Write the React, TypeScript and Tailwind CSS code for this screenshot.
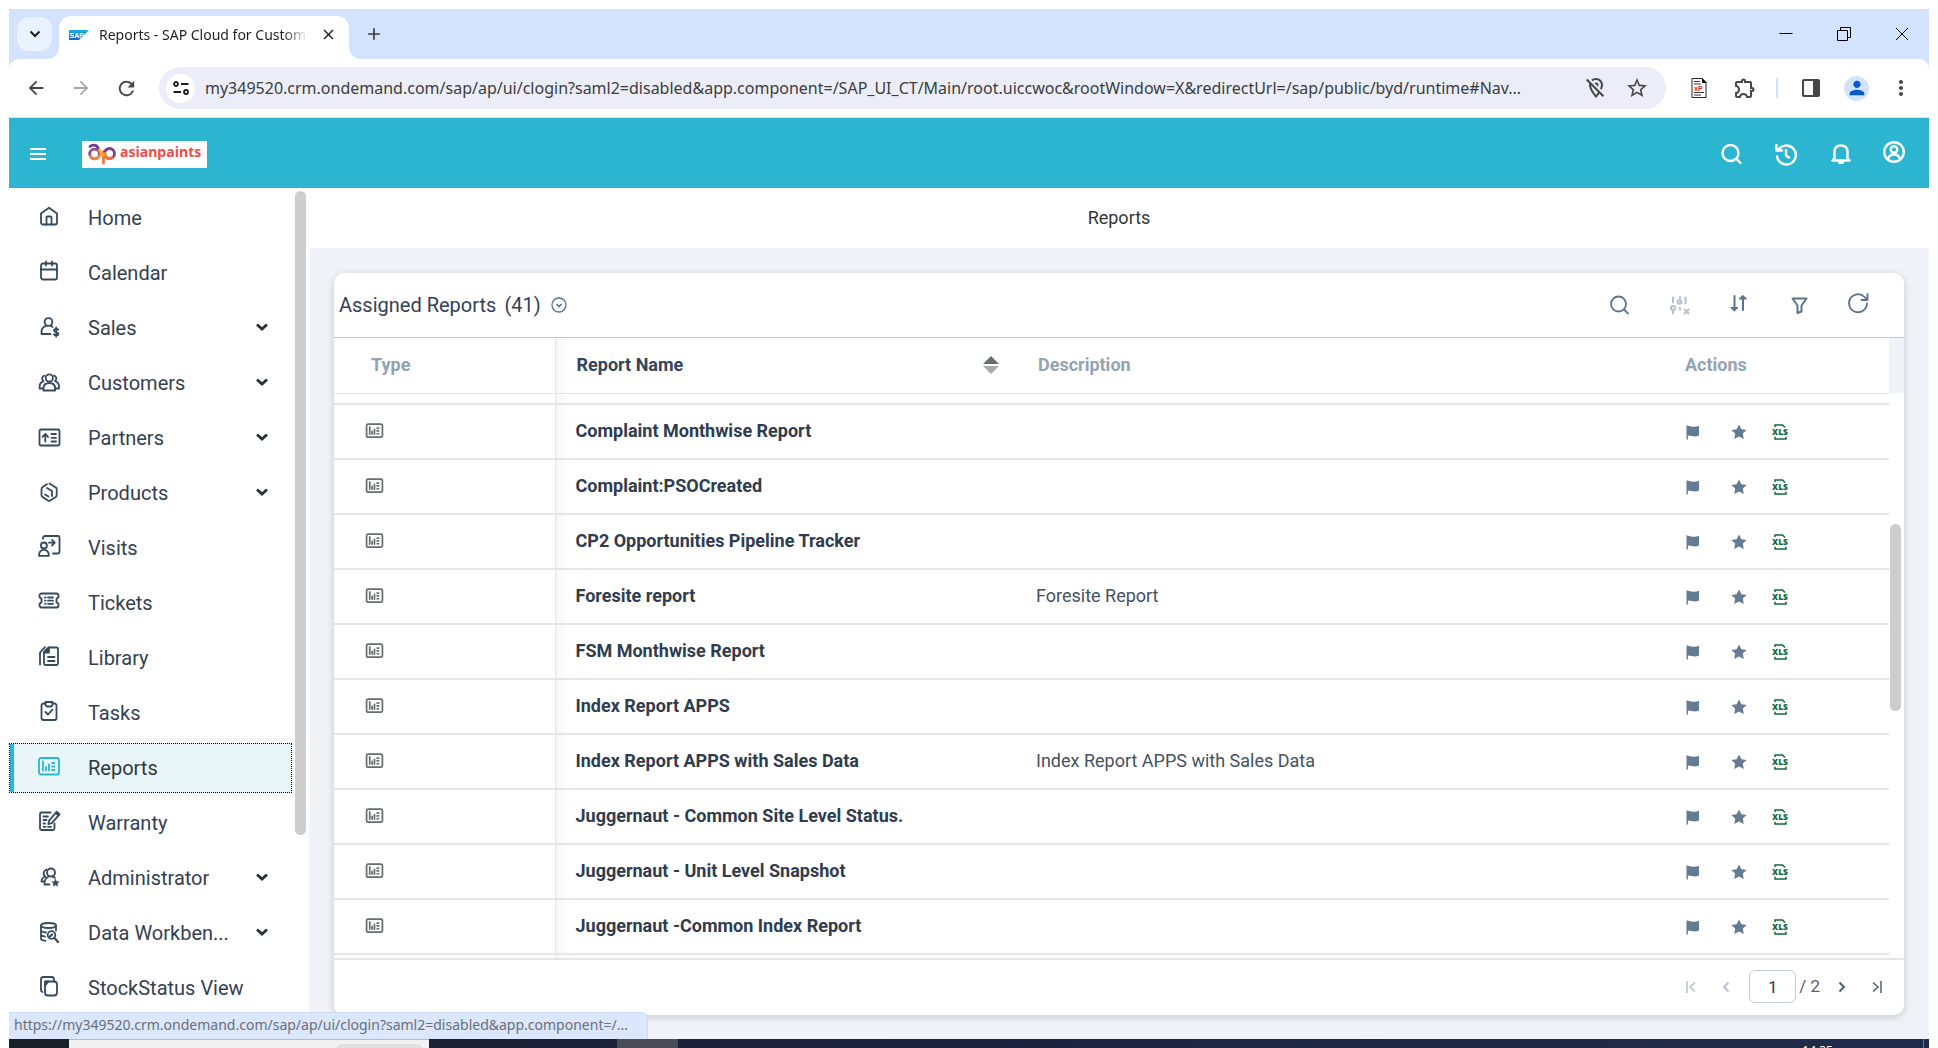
import React from "react";
import {
  MdArrowBack,
  MdArrowForward,
  MdRefresh,
  MdOutlineLocationOff,
  MdStarBorder,
  MdOutlineExtension,
  MdMoreVert,
  MdPerson,
  MdAdd,
  MdClose,
} from "react-icons/md";

type IconProps = { children: React.ReactNode; className?: string; size?: string; weight?: number };

function Icon({ children, className = "", size = "size-6", weight = 1.8 }: IconProps) {
  return (
    <svg
      viewBox="0 0 24 24"
      className={`${size} shrink-0 ${className}`}
      fill="none"
      stroke="currentColor"
      strokeWidth={weight}
      strokeLinecap="round"
      strokeLinejoin="round"
      aria-hidden="true"
    >
      {children}
    </svg>
  );
}

const chartShapes = (
  <>
    <rect x="2" y="4" width="20" height="16.5" rx="2" />
    <path d="M6 7.5v9M9 13v3.5M12 10.5v6" />
    <path d="M14.5 9H18M14.5 12.5H18M14.5 16H18" strokeWidth="2" strokeLinecap="butt" />
  </>
);

const icons: Record<string, React.ReactNode> = {
  Home: (
    <>
      <path d="M4 9.5 12 3.8l8 5.7v9a2 2 0 0 1-2 2H6a2 2 0 0 1-2-2z" />
      <path d="M9.5 20.500V13.500a1 1 0 0 1 1-1h3a1 1 0 0 1 1 1v7" />
    </>
  ),
  Calendar: (
    <>
      <rect x="4" y="4.5" width="16" height="16" rx="2" />
      <path d="M4 10.500h16" strokeWidth="2.2" />
      <path d="M9 2.500v4M15 2.500v4" />
    </>
  ),
  Sales: (
    <>
      <circle cx="11.5" cy="8" r="3.9" />
      <path d="M13.500 20H4.500v-1.500c0-3.500 2-6 5-6.800M13.500 11.700c.9.300 1.500.700 2 1.300" />
      <path d="M21.300 15.800c-.5-.8-1.300-1-2.200-1-1.300 0-2.100.6-2.100 1.600 0 2.300 4.400 1 4.400 3.300 0 1-.9 1.600-2.200 1.600-1 0-1.800-.3-2.300-1.100M19.200 13.500v9.200" />
    </>
  ),
  Customers: (
    <>
      <circle cx="12.3" cy="9" r="3.6" />
      <path d="M6.500 21.500v-2c0-3.200 2-5.500 5.800-5.500s5.800 2.300 5.800 5.500v2z" />
      <path d="M7.500 6.700a2.900 2.900 0 0 0-1 5.300M17 6.700a2.900 2.900 0 0 1 1 5.300M6 12.300c-2.200.9-3.400 2.800-3.400 5.200v2h3.500M18.600 12.300c2.200.9 3.400 2.800 3.400 5.200v2h-3.500" />
    </>
  ),
  Partners: (
    <>
      <rect x="2.5" y="5.5" width="20" height="16" rx="1.5" />
      <path d="M8.300 17.500v-7M5.500 12.800l2.800-2.800 2.800 2.800" />
      <path d="M14.500 10h4.500M14.500 13.800h4.500M14.500 17.500h4.500" />
    </>
  ),
  Products: (
    <>
      <path d="M10 5.200 6 7.700a3 3 0 0 0-1.500 2.500v6c0 .8.400 1.400 1 1.800l5.500 3.500a2 2 0 0 0 2.200 0l5.500-3.500c.7-.4 1-1 1-1.800v-6c0-.8-.3-1.400-1-1.800L12.500 4.500" />
      <path d="M10 9l5 3v5M8 15.500l3.500 2" />
    </>
  ),
  Visits: (
    <>
      <circle cx="6.9" cy="11.5" r="3" />
      <path d="M2 21.800c0-4 2-6 4.900-6s4.900 2 4.900 6z" />
      <path d="M6 4.800V4a2 2 0 0 1 2-2h13a1.500 1.500 0 0 1 1.500 1.500V17.500a2 2 0 0 1-2 2H16" />
      <path d="M12 8.700h5.500M15 5.900l2.800 2.800-2.800 2.800" />
    </>
  ),
  Tickets: (
    <>
      <path d="M4.500 4.500h15a2 2 0 0 1 2 2v1.500l-2 2v3l2 2v1.500a2 2 0 0 1-2 2h-15a2 2 0 0 1-2-2V15l2-2v-3l-2-2V6.500a2 2 0 0 1 2-2z" />
      <path d="M8 8.500h.6M11 8.500h5M8 11.700h.6M11 11.700h5M8 14.800h.6M11 14.800h5" />
    </>
  ),
  Library: (
    <>
      <path d="M11.500 3.500h8a1.500 1.500 0 0 1 1.500 1.500v14.500a1.500 1.500 0 0 1-1.500 1.500H8.500A1.500 1.500 0 0 1 7 19.500V8z" />
      <path d="M12 3.500v5H7z" fill="currentColor" />
      <path d="M3 20.500V8.500l5-5.300M11 13h6.500M11 17h6.500" />
    </>
  ),
  Tasks: (
    <>
      <path d="M8.500 4.500H6.500a2 2 0 0 0-2 2v12.500a2 2 0 0 0 2 2h11a2 2 0 0 0 2-2V6.500a2 2 0 0 0-2-2H15.500" />
      <path d="M8.500 3h7v3l-1.500 1.500h-4L8.500 6zM8.500 13l2.500 2.500 4.500-4.800" />
    </>
  ),
  Reports: chartShapes,
  Warranty: (
    <>
      <path d="M13.500 3.500H4.500A1.500 1.500 0 0 0 3 5v14.500A1.500 1.500 0 0 0 4.500 21h11.500a1.500 1.500 0 0 0 1.500-1.500V14.500" />
      <path d="M6.500 7.500H11M6.500 11h3M6.500 14.500h1.500M6.500 17.800h2M11 17.800h3" />
      <path d="m12 11.700 7-8 2.800 2.400-7 8-3.500 1z" />
      <path d="m18.700 4 1-1.300 2.800 2.400-1 1.300z" fill="currentColor" />
    </>
  ),
  Administrator: (
    <>
      <circle cx="14" cy="8.5" r="4" />
      <path d="M7.500 20.500c-.3-4.500 1.500-7 4.500-8M15.500 12.500c1 .2 1.800.7 2.400 1.300M7.500 20.500h5M9.500 5.500a4 4 0 0 0-1 7.200M4.500 17.500c0-2.500 1.200-4.200 3.500-5M4.500 17.500h3" />
      <path d="m18.500 15.500 1 2.200 2.300.2-1.700 1.600.5 2.400-2.100-1.200-2.100 1.200.5-2.400-1.700-1.600 2.300-.2z" fill="currentColor" strokeWidth=".8" />
    </>
  ),
  "Data Workben...": (
    <>
      <ellipse cx="11.5" cy="6.5" rx="7.5" ry="2.5" />
      <path d="M4 6.500V19.500c0 1 1.500 2 4.500 2.300M19 6.500v5M4 11c0 1.200 2 2.200 5 2.500M4 15.300c0 1.200 1.500 2 4 2.300" />
      <circle cx="14.5" cy="16" r="3.8" />
      <path d="m13 17.500 2-2M17.500 19l3.500 4" strokeWidth="2.2" />
    </>
  ),
  "StockStatus View": (
    <>
      <rect x="8" y="7.5" width="12" height="14" rx="3" />
      <path d="M5.500 18A2 2 0 0 1 4 16V5.500A2.500 2.500 0 0 1 6.500 3h8a2.500 2.500 0 0 1 2.500 2.500v2" />
      <path d="M8 11.500 11.500 7.500H8z" />
    </>
  ),
};

const navItems: { label: string; expandable?: boolean }[] = [
  { label: "Home" },
  { label: "Calendar" },
  { label: "Sales", expandable: true },
  { label: "Customers", expandable: true },
  { label: "Partners", expandable: true },
  { label: "Products", expandable: true },
  { label: "Visits" },
  { label: "Tickets" },
  { label: "Library" },
  { label: "Tasks" },
  { label: "Reports" },
  { label: "Warranty" },
  { label: "Administrator", expandable: true },
  { label: "Data Workben...", expandable: true },
  { label: "StockStatus View" },
];

const reports: { name: string; description?: string }[] = [
  { name: "Complaint Monthwise Report" },
  { name: "Complaint:PSOCreated" },
  { name: "CP2 Opportunities Pipeline Tracker" },
  { name: "Foresite report", description: "Foresite Report" },
  { name: "FSM Monthwise Report" },
  { name: "Index Report APPS" },
  { name: "Index Report APPS with Sales Data", description: "Index Report APPS with Sales Data" },
  { name: "Juggernaut - Common Site Level Status." },
  { name: "Juggernaut - Unit Level Snapshot" },
  { name: "Juggernaut -Common Index Report" },
];

function SapLogo() {
  return (
    <svg viewBox="0 0 20 10" className="h-2.5 w-5 shrink-0" aria-hidden="true">
      <defs>
        <linearGradient id="sapFill" x1="0" y1="0" x2="0" y2="1">
          <stop offset="0" stopColor="#17b1ee" />
          <stop offset="1" stopColor="#1566c0" />
        </linearGradient>
      </defs>
      <path d="M0 0h20L10 10H0z" fill="url(#sapFill)" />
      <text x="0.5" y="7.5" fontSize="7" fontWeight="700" fill="#fff" fontFamily="Liberation Sans, sans-serif">
        SAP
      </text>
    </svg>
  );
}

function TabStrip() {
  return (
    <div className="flex h-[50px] items-start bg-[#d3e2fd]">
      <button
        aria-label="Search tabs"
        className="mt-2 ml-2 grid h-[34px] w-[35px] place-items-center rounded-xl bg-[#eaf1ff] text-[#1f1f1f]"
      >
        <svg viewBox="0 0 12 8" className="h-2 w-3" fill="none" stroke="currentColor" strokeWidth="2" aria-hidden="true">
          <path d="m1.500 1.500 4.500 4.500 4.500-4.500" />
        </svg>
      </button>
      <div className="relative mt-[7px] ml-[7px] flex h-[43px] w-[290px] items-center rounded-t-xl bg-white pb-1.5 pl-2.5">
        <svg viewBox="0 0 12 12" className="absolute bottom-0 -left-3 size-3 text-white" aria-hidden="true">
          <path d="M12 0v12H0A12 12 0 0 0 12 0z" fill="currentColor" />
        </svg>
        <svg viewBox="0 0 12 12" className="absolute -right-3 bottom-0 size-3 text-white" aria-hidden="true">
          <path d="M0 0v12h12A12 12 0 0 1 0 0z" fill="currentColor" />
        </svg>
        <SapLogo />
        <span className="ml-2.5 w-[209px] overflow-hidden bg-linear-to-r from-[#1f1f1f] from-88% to-transparent bg-clip-text text-sm whitespace-nowrap text-transparent">
          Reports - SAP Cloud for Customer
        </span>
        <button aria-label="Close tab" className="ml-3 text-[#1f1f1f]">
          <MdClose className="size-[17px]" />
        </button>
      </div>
      <button aria-label="New tab" className="mt-[15px] ml-[15px] text-[#3c3c3c]">
        <MdAdd className="size-5" />
      </button>
      <div className="mt-4 mr-5 ml-auto flex gap-[42px] text-black">
        {[
          ["Minimize", "M2.500 8.500h13"],
          ["Restore", "M2.500 5.500h10v10h-10zM5.500 5.500v-3h10v10h-3"],
          ["Close window", "m3 3 12 12M15 3 3 15"],
        ].map(([label, d]) => (
          <button key={label} aria-label={label} className="w-4">
            <svg viewBox="0 0 18 18" className="size-[18px] max-w-none" fill="none" stroke="currentColor" aria-hidden="true">
              <path d={d} />
            </svg>
          </button>
        ))}
      </div>
    </div>
  );
}

function Toolbar() {
  return (
    <div className="bg-[#d3e2fd]">
      <div className="flex h-[59px] items-center rounded-t-[10px] border-b border-[#d9e4e0] bg-white pr-4 pl-4 text-[#474747]">
        <button aria-label="Back"><MdArrowBack className="size-[22px]" /></button>
        <button aria-label="Forward" className="ml-[23px] text-[#a8a8a8]"><MdArrowForward className="size-[22px]" /></button>
        <button aria-label="Reload" className="ml-[23px]"><MdRefresh className="size-[23px]" /></button>
        <div className="ml-[21px] flex h-[42px] min-w-0 flex-1 items-center rounded-full bg-[#ebeef8] pr-[17px] pl-[7px]">
          <button aria-label="Site information" className="grid size-[29px] shrink-0 place-items-center rounded-full bg-white text-[#1f1f1f]">
            <svg viewBox="0 0 16 14" className="h-3.5 w-4" fill="none" stroke="currentColor" strokeWidth="1.8" aria-hidden="true">
              <circle cx="3" cy="3" r="2" />
              <path d="M8 3h7.500M0.500 11H8" />
              <circle cx="13" cy="11" r="2" />
            </svg>
          </button>
          <input
            aria-label="Address"
            readOnly
            className="ml-2.5 min-w-0 flex-1 bg-transparent text-base text-[#3c3c3c] outline-none"
            value="my349520.crm.ondemand.com/sap/ap/ui/clogin?saml2=disabled&app.component=/SAP_UI_CT/Main/root.uiccwoc&rootWindow=X&redirectUrl=/sap/public/byd/runtime#Nav..."
          />
          <button aria-label="Location blocked" className="ml-1"><MdOutlineLocationOff className="size-6" /></button>
          <button aria-label="Bookmark" className="ml-[17px]"><MdStarBorder className="size-6" /></button>
        </div>
        <button aria-label="XPath extension" className="ml-[25px]">
          <svg viewBox="0 0 16 20" className="h-5 w-4" aria-hidden="true">
            <path d="M1 .5h10l4 4v15H1z" fill="#fff" stroke="#222" />
            <path d="M11 0v5h5z" fill="#000" />
            <path d="M3 3.500h6M3 6h7M3 14.500h10M3 17h7" stroke="#333" />
            <text x="3" y="13" fontSize="7" fontWeight="700" fontFamily="Liberation Sans, sans-serif" fill="#e02020">xP</text>
          </svg>
        </button>
        <button aria-label="Extensions" className="ml-[26px]"><MdOutlineExtension className="size-6" /></button>
        <span className="ml-[19px] h-5 w-0.5 bg-[#d3e2fd]" />
        <button aria-label="Side panel" className="ml-6">
          <svg viewBox="0 0 18 18" className="size-[18px]" aria-hidden="true">
            <rect x="1" y="1" width="16" height="16" rx="1" fill="none" stroke="currentColor" strokeWidth="2" />
            <path d="M11 1h6v16h-6z" fill="currentColor" />
          </svg>
        </button>
        <button aria-label="Profile" className="ml-6 grid size-[25px] place-items-center rounded-full bg-[#d3e2fd] text-[#0b57d0]">
          <MdPerson className="size-[22px]" />
        </button>
        <button aria-label="Browser menu" className="ml-5"><MdMoreVert className="size-6" /></button>
      </div>
    </div>
  );
}

function AppHeader() {
  return (
    <header className="flex h-[70px] items-center bg-[#2cb5d0] pt-0.5 pr-[23px] pl-5 text-white">
      <button aria-label="Toggle menu">
        <svg viewBox="0 0 18 14" className="h-3.5 w-[18px]" stroke="currentColor" strokeWidth="2" aria-hidden="true">
          <path d="M1 2h16M1 7h16M1 12h16" />
        </svg>
      </button>
      <a href="#home" aria-label="asianpaints" className="ml-[35px] flex h-[27px] w-[125px] items-center bg-white pl-1.5">
        <svg viewBox="2 2 28 22" className="h-[22px] w-7" fill="none" strokeWidth="2.8" strokeLinecap="round" aria-hidden="true">
          <path d="M4 5.500C6 3.500 11 3 12.500 8" stroke="#6a3f8f" />
          <circle cx="8.5" cy="13" r="4.8" stroke="#9a4a8a" />
          <path d="M4.500 15.500c2 3 6 3 8 .5s4-6 8-7" stroke="#f58a3c" />
          <circle cx="23.5" cy="12.5" r="5" stroke="#7a3f8c" />
          <path d="M26 16.500c-3 2.500-7 .5-7-4M17.500 13v9" stroke="#f7723a" />
          <path d="M13.500 9c1 3 2 4 4 5" stroke="#f9b233" />
        </svg>
        <span className="ml-1 pb-1 font-['Open_Sans',sans-serif] text-sm leading-none font-bold text-[#ee4b4b]">asianpaints</span>
      </a>
      <div className="ml-auto flex items-center gap-[31px]">
        <button aria-label="Search">
          <Icon weight={2.4}><circle cx="11.5" cy="11" r="8" /><path d="m17.500 17 4 4" /></Icon>
        </button>
        <button aria-label="History">
          <Icon weight={2.4}><path d="M4 8.500a9.500 9.500 0 1 1-1 6M2.500 3v5.500H8M12 8v5.500l3 2" /></Icon>
        </button>
        <button aria-label="Notifications">
          <Icon weight={2.4}><path d="M3.500 18.500h17L18.500 16V10c0-4-2.500-6.500-6.500-6.500S5.500 6 5.500 10v6z" /><path d="M10.500 20.500h3" strokeWidth="3" /></Icon>
        </button>
        <button aria-label="Account" className="-ml-0.5 pb-1">
          <Icon weight={2.4}><circle cx="12" cy="12" r="9.8" /><circle cx="12" cy="9.5" r="3.3" /><path d="M6 19c1-3.500 3-4.500 6-4.500s5 1 6 4.500" /></Icon>
        </button>
      </div>
    </header>
  );
}

function Sidebar() {
  return (
    <nav className="relative flex w-[300px] shrink-0 flex-col gap-[5px] overflow-hidden bg-white pt-[5px] pr-[17px]">
      {navItems.map(({ label, expandable }) => {
        const active = label === "Reports";
        return (
          <a
            key={label}
            href="#nav"
            aria-current={active ? "page" : undefined}
            className={
              active
                ? "relative flex h-[50px] shrink-0 items-center border border-dotted border-black bg-[#e8f6fa] pr-[23px] pl-[27px] text-xl text-[#32363a]"
                : "relative flex h-[50px] shrink-0 items-center pr-6 pl-7 text-xl text-[#354052]"
            }
          >
            {active && <span className="absolute inset-y-0 left-0 w-1 bg-[#2cb5d0]" />}
            <Icon className={active ? "mb-1 text-[#2cb5d0]" : "mb-1 text-[#354a5f]"}>{icons[label]}</Icon>
            <span className="ml-[27px]">{label}</span>
            {expandable && (
              <svg viewBox="0 0 12 8" className="mb-0.5 ml-auto h-2 w-3 text-[#2b2f36]" fill="none" stroke="currentColor" strokeWidth="2.8" aria-hidden="true">
                <path d="m1 1.500 5 4.500 5-4.500" />
              </svg>
            )}
          </a>
        );
      })}
      <span className="absolute top-[3px] right-[3px] h-[644px] w-[11px] rounded-full bg-[#cdcdcd]" />
    </nav>
  );
}

function TableTools() {
  return (
    <div className="ml-auto flex items-center gap-9 text-[#5b738b]">
      <button aria-label="Search reports">
        <Icon><circle cx="10.5" cy="11" r="7.5" /><path d="m16 16.500 4 4" /></Icon>
      </button>
      <button aria-label="Clear adjustments" disabled className="text-[#b6c0cb]">
        <Icon weight={2}><path d="M5 4.500v5M12 4v2M17.500 4.500v6M5 17v3.500M12 14.500v2M16.500 16.500l4 4M20.500 16.500l-4 4" /><circle cx="11.5" cy="9" r="1.8" /><circle cx="5" cy="15" r="2" /></Icon>
      </button>
      <button aria-label="Sort" className="pb-1">
        <Icon weight={2}><path d="M6.500 5v13M15 19V6" /><path d="M3 16.500h7L6.500 20zM11.500 8h7L15 4.500z" fill="currentColor" strokeWidth="1" /></Icon>
      </button>
      <button aria-label="Filter">
        <Icon weight={2}><path d="M4.500 5.500H18.500l-5 7v6l-4 1.500V12.500z" /></Icon>
      </button>
      <button aria-label="Refresh" className="-ml-0.5 pb-1">
        <Icon><path d="M21 12.500a9 9 0 1 1-2.500-6.500l2.500 2.500M21.500 3v6H15.500" /></Icon>
      </button>
    </div>
  );
}

function RowActions({ name }: { name: string }) {
  return (
    <div className="flex items-center pl-[21px] text-[#647b94]">
      <button aria-label={`Flag ${name}`} className="w-4">
        <svg viewBox="0 0 16 16" className="size-4" fill="currentColor" aria-hidden="true">
          <path d="M1.500 1c0 .6 3 1 5 1.500 3 .6 5 .3 7.500-.8v9.800c-2.500 1-4.500 1.200-7.500.5-1.500-.3-2.500-.5-3.600-.5V15.500H1.500z" />
        </svg>
      </button>
      <button aria-label={`Favorite ${name}`} className="ml-[30px] w-4">
        <svg viewBox="0 0 16 16" className="size-4" fill="currentColor" aria-hidden="true">
          <path d="m8 .5 2.400 4.700 5.300.7-3.900 3.700 1 5.400L8 12.500 3.200 15l1-5.400L.3 5.900l5.300-.7z" />
        </svg>
      </button>
      <button aria-label={`Export ${name}`} className="ml-[25px] w-[17px] text-[#12683c]">
        <svg viewBox="0 0 17 16" className="h-4 w-[17px]" fill="none" stroke="currentColor" strokeWidth="1.5" aria-hidden="true">
          <path d="M3 3V1h7.500L13 3.500M3 12.800V15h11v-2.200" />
          <text x="0" y="11" fontSize="8.5" fontWeight="800" fill="currentColor" stroke="none" fontFamily="Open Sans, sans-serif">
            XLS
          </text>
        </svg>
      </button>
    </div>
  );
}

const stickyEdge = "border-r border-[#e5e5e5]";
const nameEdge = "shadow-[inset_24px_0_16px_-20px_rgba(0,0,0,0.05)]";

function ReportTable() {
  return (
    <div className="flex min-h-0 flex-1">
      <div className="min-w-0 flex-1 overflow-hidden">
        <table className="w-full table-fixed border-collapse text-left">
          <colgroup>
            <col className="w-[221px]" />
            <col className="w-[463px]" />
            <col />
            <col className="w-[225px]" />
          </colgroup>
          <thead className="text-lg text-[#94a3b2]">
            <tr className="h-[55px] border-b border-[#e5e5e5]">
              <th className={`pl-[37px] font-bold ${stickyEdge}`}>Type</th>
              <th className={`pl-[21px] font-bold text-[#32455a] ${nameEdge}`} aria-sort="ascending">
                <div className="flex items-center justify-between pr-[19px]">
                  Report Name
                  <svg viewBox="0 0 16 18" className="h-[18px] w-4" aria-hidden="true">
                    <path d="M8 0l8 8H0z" fill="#6a6d70" />
                    <path d="M0 10h16l-8 8z" fill="#a9acaf" />
                  </svg>
                </div>
              </th>
              <th className="pl-5 font-bold">Description</th>
              <th className="pl-[21px] font-bold">Actions</th>
            </tr>
          </thead>
          <tbody>
            <tr className="h-[11px] border-b-2 border-[#e5e5e5]">
              <td className={stickyEdge} />
              <td className={nameEdge} />
              <td />
              <td />
            </tr>
            {reports.map(({ name, description }) => (
              <tr key={name} className="h-[55px] border-b-2 border-[#e5e5e5]">
                <td className={`pb-0.5 pl-[31px] text-[#6a6d70] ${stickyEdge}`}>
                  <Icon size="size-[19px]" weight={2.2}>{chartShapes}</Icon>
                </td>
                <td className={`pb-0.5 pl-5 text-lg font-bold text-[#2f3c4e] ${nameEdge}`}>
                  <a href="#report">{name}</a>
                </td>
                <td className="pb-0.5 pl-[18px] text-lg text-[#45515f]">{description}</td>
                <td>
                  <RowActions name={name} />
                </td>
              </tr>
            ))}
            <tr className="h-5">
              <td className={stickyEdge} />
              <td className={nameEdge} />
              <td />
              <td />
            </tr>
          </tbody>
        </table>
      </div>
      <div className="flex w-[15px] flex-col items-center">
        <div className="h-[55px] w-full bg-[#f2f3f8]" />
        <div className="mt-[131px] mr-0.5 h-[187px] w-[11px] rounded-full bg-[#cdcdcd]" />
      </div>
    </div>
  );
}

function Pager() {
  return (
    <div className="flex h-[57px] shrink-0 items-center justify-end border-t-2 border-[#e5e5e5] pr-[22px] pb-0.5 text-[17px] text-[#55606c]">
      <button aria-label="First page" disabled className="text-[#b9c1ca]">
        <svg viewBox="0 0 10 12" className="h-3 w-2.5" fill="none" stroke="currentColor" strokeWidth="1.5" aria-hidden="true"><path d="M1 0v12M9 1.500 4 6l5 4.500" /></svg>
      </button>
      <button aria-label="Previous page" disabled className="ml-[26px] text-[#b9c1ca]">
        <svg viewBox="0 0 8 12" className="h-3 w-2" fill="none" stroke="currentColor" strokeWidth="2" aria-hidden="true"><path d="M6.500 1.500 2 6l4.500 4.500" /></svg>
      </button>
      <input
        aria-label="Page number"
        defaultValue="1"
        className="ml-[19px] h-[33px] w-[47px] rounded-md border border-[#c3ccd6] bg-white text-center text-[17px] text-[#2f3c4e]"
      />
      <span className="ml-0.5 pl-px">/ 2</span>
      <button aria-label="Next page" className="ml-[18px]">
        <svg viewBox="0 0 8 12" className="h-3 w-2" fill="none" stroke="currentColor" strokeWidth="2" aria-hidden="true"><path d="M1.500 1.500 6 6l-4.500 4.500" /></svg>
      </button>
      <button aria-label="Last page" className="ml-[26px]">
        <svg viewBox="0 0 10 12" className="h-3 w-2.5" fill="none" stroke="currentColor" strokeWidth="1.5" aria-hidden="true"><path d="M9 0v12M1 1.500 6 6l-5 4.500" /></svg>
      </button>
    </div>
  );
}

function Taskbar() {
  return (
    <div className="flex h-[9px] shrink-0 overflow-hidden bg-linear-to-r from-[#1b1f26] via-[#1d2440] to-[#1f2a4a] text-white">
      <span className="w-[60px] shrink-0" />
      <span className="flex w-[360px] shrink-0 justify-end border-t border-[#b8bac0] bg-[#f1f1f1] pr-1.5">
        <span className="mt-1 h-5 w-[87px] rounded-md bg-[#e1e1e1]" />
      </span>
      <span className="ml-[188px] w-[61px] shrink-0 bg-[#4a4c56]" />
      <span className="mt-1 mr-[90px] ml-auto text-xs leading-4">14:35</span>
      <span className="mr-[5px] w-px bg-[#6d7590]" />
    </div>
  );
}

export default function App() {
  return (
    <div className="flex h-screen flex-col overflow-hidden bg-white px-[9px] pt-[9px] font-['Noto_Sans',sans-serif]">
      <TabStrip />
      <Toolbar />
      <div className="relative flex min-h-0 flex-1 flex-col font-[Roboto,sans-serif]">
        <AppHeader />
        <div className="flex min-h-0 flex-1">
          <Sidebar />
          <main className="flex min-w-0 flex-1 flex-col bg-[#f2f3f8]">
            <h1 className="flex h-[60px] shrink-0 items-center justify-center bg-white text-lg text-[#32363a]">Reports</h1>
            <section className="m-[25px] mb-6 flex min-h-0 flex-1 flex-col overflow-hidden rounded-[10px] bg-white shadow-[0_2px_8px_rgba(0,0,0,0.18)]">
              <div className="flex h-[65px] shrink-0 items-center border-b border-[#c5c7ca] pr-[34px] pl-[5px]">
                <h2 className="text-xl text-[#354052]">Assigned Reports</h2>
                <span className="ml-2 text-xl text-[#354052]">(41)</span>
                <button aria-label="Choose view" className="ml-2.5 text-[#5b738b]">
                  <svg viewBox="0 0 16 16" className="size-4" fill="none" stroke="currentColor" strokeWidth="1.3" aria-hidden="true">
                    <circle cx="8" cy="8" r="7" />
                    <path d="M5.500 7 8 9.500 10.500 7" strokeWidth="1.6" />
                  </svg>
                </button>
                <TableTools />
              </div>
              <ReportTable />
              <Pager />
            </section>
          </main>
        </div>
        <div className="absolute bottom-0 left-0 flex h-[27px] w-[639px] items-center rounded-tr-md border-t border-r border-[#cddaf0] bg-[#dae7fc] pb-0.5 pl-[5px] font-['Noto_Sans',sans-serif] text-sm whitespace-nowrap text-[#6a7078]">
          https://my349520.crm.ondemand.com/sap/ap/ui/clogin?saml2=disabled&amp;app.component=/...
        </div>
      </div>
      <Taskbar />
    </div>
  );
}
